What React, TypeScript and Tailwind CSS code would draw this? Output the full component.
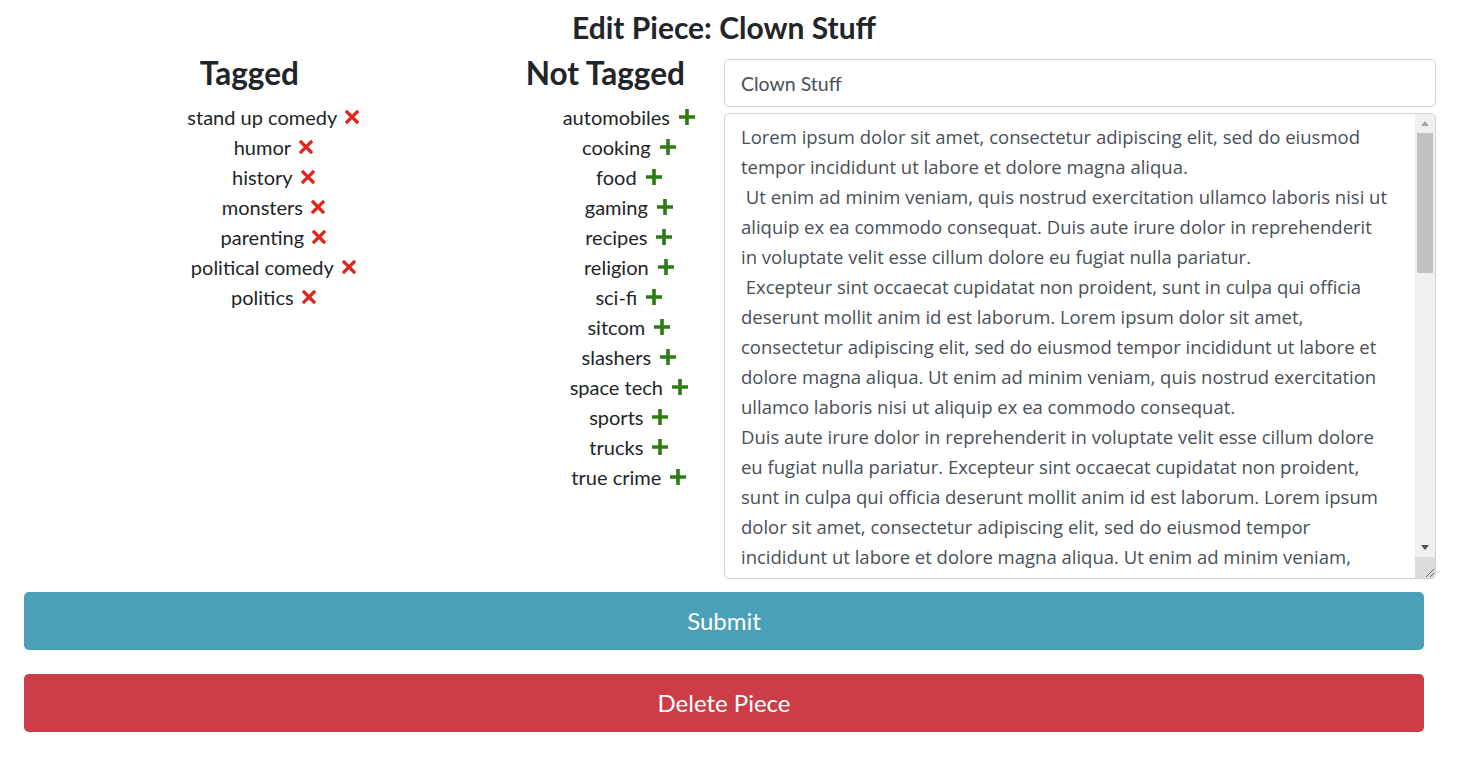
import React from "react";

const tagged = ["stand up comedy", "humor", "history", "monsters", "parenting", "political comedy", "politics"];
const notTagged = [
  "automobiles",
  "cooking",
  "food",
  "gaming",
  "recipes",
  "religion",
  "sci-fi",
  "sitcom",
  "slashers",
  "space tech",
  "sports",
  "trucks",
  "true crime",
];

const body =
  "Lorem ipsum dolor sit amet, consectetur adipiscing elit, sed do eiusmod tempor incididunt ut labore et dolore magna aliqua.\n Ut enim ad minim veniam, quis nostrud exercitation ullamco laboris nisi ut aliquip ex ea commodo consequat. Duis aute irure dolor in reprehenderit in voluptate velit esse cillum dolore eu fugiat nulla pariatur.\n Excepteur sint occaecat cupidatat non proident, sunt in culpa qui officia deserunt mollit anim id est laborum. Lorem ipsum dolor sit amet, consectetur adipiscing elit, sed do eiusmod tempor incididunt ut labore et dolore magna aliqua. Ut enim ad minim veniam, quis nostrud exercitation ullamco laboris nisi ut aliquip ex ea commodo consequat.\nDuis aute irure dolor in reprehenderit in voluptate velit esse cillum dolore eu fugiat nulla pariatur. Excepteur sint occaecat cupidatat non proident, sunt in culpa qui officia deserunt mollit anim id est laborum. Lorem ipsum dolor sit amet, consectetur adipiscing elit, sed do eiusmod tempor incididunt ut labore et dolore magna aliqua. Ut enim ad minim veniam, quis nostrud exercitation ullamco laboris nisi ut aliquip ex ea commodo consequat.";

function RemoveIcon() {
  return (
    <svg viewBox="0 0 14 14" className="w-[14px] h-[14px] inline-block ml-2">
      <path d="M2 2 L12 12 M12 2 L2 12" stroke="#e2231a" strokeWidth="3.2" strokeLinecap="square" />
    </svg>
  );
}

function AddIcon() {
  return (
    <svg viewBox="0 0 18 18" className="w-[18px] h-[18px] inline-block ml-2">
      <path d="M9 1 V17 M1 9 H17" stroke="#2e7b14" strokeWidth="3.6" />
    </svg>
  );
}

// classic scrollbar, drawn since the headless browser hides native ones
function ScrollBar() {
  return (
    <div className="w-[20px] bg-[#f0f0f0] flex flex-col items-center shrink-0">
      <div className="h-[19px] flex items-center justify-center">
        <svg viewBox="0 0 8 5" className="w-[8px] h-[5px]">
          <path d="M0 5 L4 0 L8 5 Z" fill="#a3a3a3" />
        </svg>
      </div>
      <div className="w-[16px] h-[140px] bg-[#c1c1c1]" />
      <div className="flex-1" />
      <div className="h-[19px] flex items-center justify-center">
        <svg viewBox="0 0 8 5" className="w-[8px] h-[5px]">
          <path d="M0 0 L8 0 L4 5 Z" fill="#505050" />
        </svg>
      </div>
      <div className="w-[20px] h-[21px] bg-[#dcdcdc] flex items-end justify-end">
        <svg viewBox="0 0 12 12" className="w-[12px] h-[12px]">
          <path d="M11 3 L3 11 M11 7 L7 11" stroke="#6b6b6b" strokeWidth="1" />
        </svg>
      </div>
    </div>
  );
}

export default function App() {
  return (
    <div className="min-h-screen bg-white text-[#212529] font-['Lato','Noto_Sans',sans-serif]">
      <div className="w-[1448px]">
        <h1 className="text-center text-[30px] font-bold leading-[36px] pt-[9px] mb-[14px]">
          Edit Piece: Clown Stuff
        </h1>

        <div className="px-3">
          <div className="flex">
            {/* Tagged */}
            <div className="w-1/3 text-center">
              <h2 className="text-[31.5px] font-bold leading-[36px] -mt-[4px] mb-[11px]">Tagged</h2>
              <ul className="pl-12">
                {tagged.map((t) => (
                  <li key={t} className="text-[20px] leading-[30px] flex items-center justify-center">
                    {t}
                    <RemoveIcon />
                  </li>
                ))}
              </ul>
            </div>

            {/* Not tagged */}
            <div className="w-1/6 text-center">
              <h2 className="text-[31.5px] font-bold leading-[36px] -mt-[4px] mb-[11px]">Not Tagged</h2>
              <ul className="pl-12">
                {notTagged.map((t) => (
                  <li key={t} className="text-[20px] leading-[30px] flex items-center justify-center">
                    {t}
                    <AddIcon />
                  </li>
                ))}
              </ul>
            </div>

            {/* Editor */}
            <div className="w-1/2 flex flex-col gap-[6px]">
              <input
                defaultValue="Clown Stuff"
                className="h-[48px] w-full border border-[#ced4da] rounded-[5px] px-4 text-[19.5px] text-[#495057] outline-none"
              />
              <div className="h-[466px] flex border border-[#ced4da] rounded-[5px] overflow-hidden">
                <textarea
                  defaultValue={body}
                  className="flex-1 resize-none pl-4 pr-[26px] py-2 font-['Open_Sans',sans-serif] text-[18.5px] leading-[30px] text-[#495057] outline-none overflow-hidden"
                />
                <ScrollBar />
              </div>
            </div>
          </div>

          <div className="px-3 mt-[13px] flex flex-col gap-6 pb-8">
            <button className="h-[58px] w-full rounded-[5px] bg-[#4ba0b7] text-white text-[24px]">Submit</button>
            <button className="h-[58px] w-full rounded-[5px] bg-[#cc3d48] text-white text-[24px]">Delete Piece</button>
          </div>
        </div>
      </div>
    </div>
  );
}
